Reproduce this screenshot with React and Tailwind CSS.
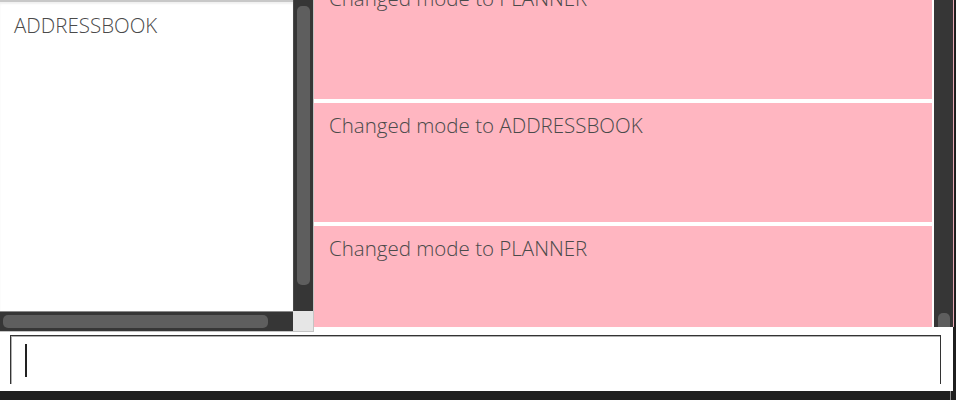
import React from "react";

const font = { fontFamily: '"Open Sans", "Noto Sans", sans-serif' };

function Card({ text, first }) {
  return (
    <div className={"h-[119px] shrink-0 bg-[#ffb6c1] pl-[15px] " + (first ? "pt-[5px]" : "pt-[9px]")}>
      <div className="text-[20.5px] leading-[26px] font-light text-[#4a4a4a]">{text}</div>
    </div>
  );
}

export default function App() {
  return (
    <div className="w-[956px] h-[400px] bg-[#1f1f1f] flex flex-col overflow-hidden" style={font}>
      <div className="w-[953px] h-[391px] bg-white flex flex-col">
        <div className="h-[327px] flex items-start">
          {/* left panel */}
          <div className="w-[314px] h-[332px] shrink-0 border-r border-b border-[#c4c4c4] grid grid-cols-[293px_20px] grid-rows-[311px_20px]">
            <div className="bg-white border-t-2 border-[#c8c8c8] shadow-[inset_0_2px_2px_rgba(0,0,0,0.06)] pl-[14px] pt-[10px]">
              <div className="text-[20.5px] leading-[26px] font-light text-[#4a4a4a]">ADDRESSBOOK</div>
            </div>
            <div className="bg-[#363636] border-l border-[#4a4a4a] px-[3px] pt-[6px]">
              <div className="h-[279px] rounded-[5px] bg-[#5e5e5e]" />
            </div>
            <div className="bg-[#363636] border-t border-[#8a8a8a] pl-[3px] pt-[3px]">
              <div className="w-[265px] h-[13px] rounded-[5px] bg-[#5e5e5e]" />
            </div>
            <div className="bg-[#e6e6e6]" />
          </div>
          {/* right list */}
          <div className="flex-1 h-[327px] flex">
            <div className="w-[618px] h-[327px] overflow-hidden bg-white">
              <div className="-mt-[20px] flex flex-col gap-[4px]">
                <Card text="Changed mode to PLANNER" first />
                <Card text="Changed mode to ADDRESSBOOK" />
                <Card text="Changed mode to PLANNER" />
              </div>
            </div>
            <div className="w-[2px] bg-white" />
            <div className="w-[19px] h-[327px] bg-[#363636] flex flex-col justify-end items-center">
              <div className="w-[12px] h-[14px] rounded-t-[5px] bg-[#5e5e5e]" />
            </div>
            <div className="w-[1px] h-[327px] bg-[#e8a8b4]" />
          </div>
        </div>
        {/* input area */}
        <div className="pt-[8px] pl-[10px] pr-[12px]">
          <div className="h-[49px] border-t border-l border-r border-[#333] shadow-[inset_1px_1px_0_#b0b0b0] pl-[14px] pt-[8px]">
            <div className="w-[2px] h-[33px] bg-[#222]" />
          </div>
        </div>
      </div>
      <div className="flex-1 flex">
        <div className="w-[950px]" />
        <div className="w-[1px] bg-[#8a8a8a]" />
      </div>
    </div>
  );
}
